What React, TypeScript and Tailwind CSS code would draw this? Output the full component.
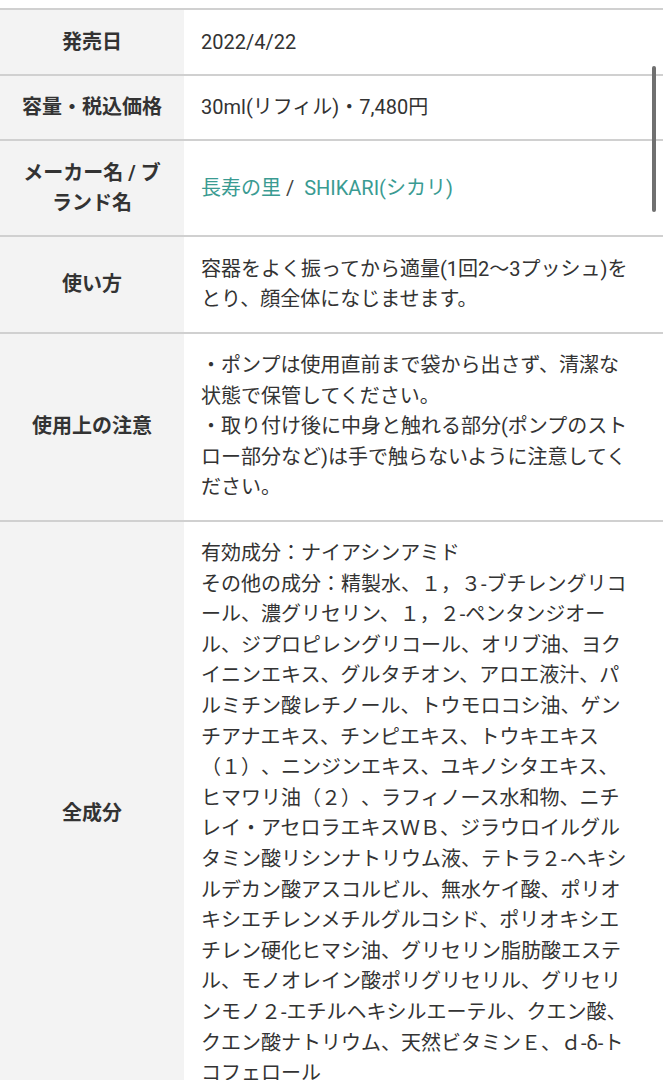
const font = { fontFamily: 'Roboto, "Noto Sans CJK JP", "Noto Sans", sans-serif' }

interface RowProps {
  label: React.ReactNode
  children: React.ReactNode
}

function Row({ label, children }: RowProps) {
  return (
    <div className="flex border-b-2 border-[#d0d0d0]">
      <div className="w-[184px] shrink-0 bg-[#f3f3f3] px-[15px] py-[16.5px] flex items-center justify-center text-center font-bold text-[#333]">
        <div>{label}</div>
      </div>
      <div className="flex-1 pl-[17px] pr-[27px] py-[16.5px] flex items-center text-[#333]">
        <div>{children}</div>
      </div>
    </div>
  )
}

const ingredients =
  '有効成分：ナイアシンアミド\nその他の成分：精製水、１，３-ブチレングリコール、濃グリセリン、１，２-ペンタンジオール、ジプロピレングリコール、オリブ油、ヨクイニンエキス、グルタチオン、アロエ液汁、パルミチン酸レチノール、トウモロコシ油、ゲンチアナエキス、チンピエキス、トウキエキス（１）、ニンジンエキス、ユキノシタエキス、ヒマワリ油（２）、ラフィノース水和物、ニチレイ・アセロラエキスＷＢ、ジラウロイルグルタミン酸リシンナトリウム液、テトラ２-ヘキシルデカン酸アスコルビル、無水ケイ酸、ポリオキシエチレンメチルグルコシド、ポリオキシエチレン硬化ヒマシ油、グリセリン脂肪酸エステル、モノオレイン酸ポリグリセリル、グリセリンモノ２-エチルヘキシルエーテル、クエン酸、クエン酸ナトリウム、天然ビタミンＥ、ｄ-δ-トコフェロール'

export default function App() {
  return (
    <div className="relative w-[663px] h-[1080px] overflow-hidden bg-white pt-2 text-[20px] leading-[30.6px] [text-spacing-trim:space-all]" style={font}>
      <div className="border-t-2 border-[#d0d0d0]">
        <Row label="発売日">2022/4/22</Row>
        <Row label="容量・税込価格">30ml(リフィル)・7,480円</Row>
        <Row label="メーカー名 / ブランド名">
          <span className="text-[#3a9b92]">長寿の里</span>
          <span className="text-[#444] whitespace-pre"> /  </span>
          <span className="text-[#3a9b92]">SHIKARI(シカリ)</span>
        </Row>
        <Row label="使い方">容器をよく振ってから適量(1回2〜3プッシュ)をとり、顔全体になじませます。</Row>
        <Row label="使用上の注意">
          ・ポンプは使用直前まで袋から出さず、清潔な状態で保管してください。
          <br />
          ・取り付け後に中身と触れる部分(ポンプのストロー部分など)は手で触らないように注意してください。
        </Row>
        <Row label="全成分">
          <span className="whitespace-pre-line">{ingredients}</span>
        </Row>
      </div>

      {/* scrollbar overlay */}
      <div className="absolute left-[652px] top-[66px] w-[4px] h-[146px] rounded-full bg-[#707070]" />
    </div>
  )
}
